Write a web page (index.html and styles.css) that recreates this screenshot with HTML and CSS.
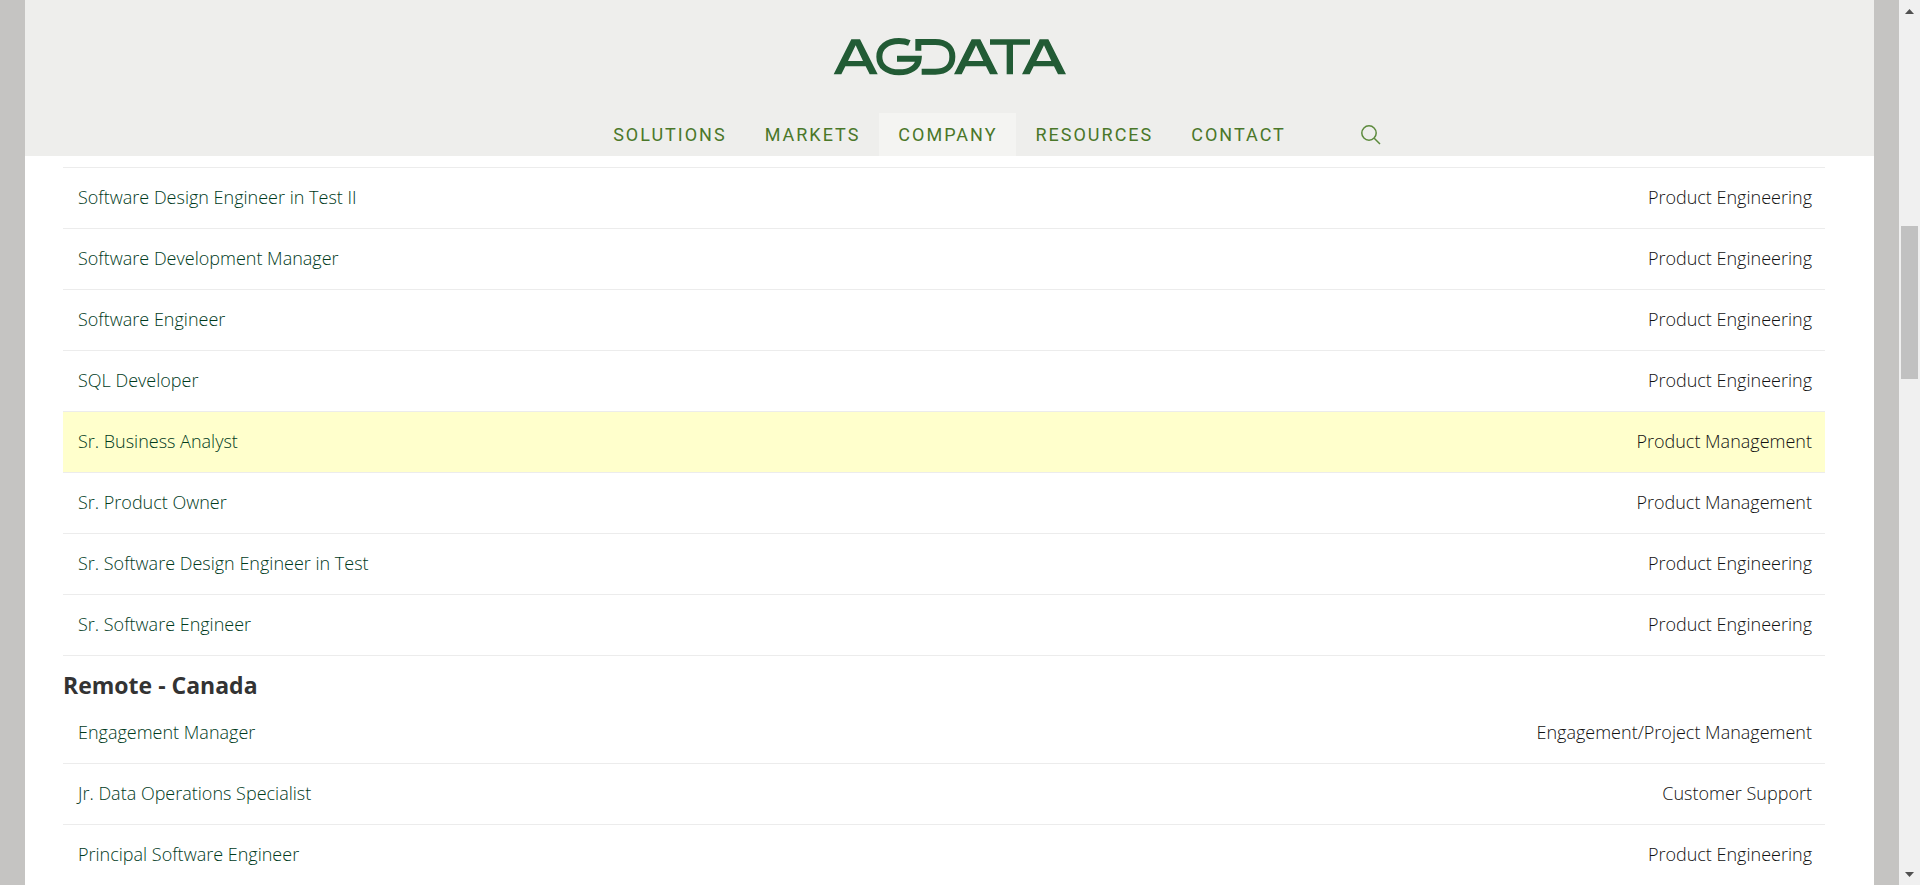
FILE: index.html
```html
<!DOCTYPE html>
<html lang="en">
<head>
<meta charset="utf-8">
<meta name="viewport" content="width=device-width, initial-scale=1">
<title>Careers | AGDATA</title>
<link rel="stylesheet" href="styles.css">
</head>
<body>
<div class="page">
  <header class="header">
    <a class="logo" href="#" aria-label="AGDATA">
      <svg class="logo-mark" viewBox="38 38 702 114" aria-hidden="true">
        <defs>
          <path id="peak" fill-rule="evenodd" d="M40 147 93 42H119L172 147H148L136 123H75L63 147ZM83 107H128L106 60Z"/>
        </defs>
        <use href="#peak"/>
        <use href="#peak" x="361"/>
        <use href="#peak" x="565"/>
        <path d="M509 42H629V58H578V147H559V58H509Z"/>
        <g class="logo-lines">
          <path d="M267 53C258 49 248 47 236 47C200 47 177 66 177 94C177 122 200 141 236 141C270 141 293 125 295 100H230"/>
          <path d="M294 76V50H345C378 50 396 68 396 94C396 121 378 139 345 139H304"/>
        </g>
      </svg>
    </a>
    <div class="menu">
      <nav class="nav" aria-label="Main">
        <a class="nav-link" href="#">SOLUTIONS</a>
        <a class="nav-link" href="#">MARKETS</a>
        <a class="nav-link nav-link-active" href="#">COMPANY</a>
        <a class="nav-link" href="#">RESOURCES</a>
        <a class="nav-link" href="#">CONTACT</a>
      </nav>
      <button class="search" type="button" aria-label="Search">
        <svg class="search-icon" viewBox="0 0 20 20" aria-hidden="true"><circle cx="8" cy="8" r="7.2"/><path d="M13.2 13.2 19 19"/></svg>
      </button>
    </div>
  </header>
  <main class="content">
    <table class="jobs jobs-continued">
      <tbody>
        <tr><td><a href="#">Software Design Engineer in Test II</a></td><td>Product Engineering</td></tr>
        <tr><td><a href="#">Software Development Manager</a></td><td>Product Engineering</td></tr>
        <tr><td><a href="#">Software Engineer</a></td><td>Product Engineering</td></tr>
        <tr><td><a href="#">SQL Developer</a></td><td>Product Engineering</td></tr>
        <tr class="highlight"><td><a href="#">Sr. Business Analyst</a></td><td>Product Management</td></tr>
        <tr><td><a href="#">Sr. Product Owner</a></td><td>Product Management</td></tr>
        <tr><td><a href="#">Sr. Software Design Engineer in Test</a></td><td>Product Engineering</td></tr>
        <tr><td><a href="#">Sr. Software Engineer</a></td><td>Product Engineering</td></tr>
      </tbody>
    </table>
    <h2 class="location">Remote - Canada</h2>
    <table class="jobs">
      <tbody>
        <tr><td><a href="#">Engagement Manager</a></td><td>Engagement/Project Management</td></tr>
        <tr><td><a href="#">Jr. Data Operations Specialist</a></td><td>Customer Support</td></tr>
        <tr><td><a href="#">Principal Software Engineer</a></td><td>Product Engineering</td></tr>
      </tbody>
    </table>
  </main>
</div>
<div class="scrollbar">
  <button class="scroll-button" type="button" aria-label="Scroll up"><svg class="scroll-arrow" viewBox="0 0 9 5" aria-hidden="true"><path d="M0 5 4.5 0 9 5Z"/></svg></button>
  <div class="scroll-track"><div class="scroll-thumb"></div></div>
  <button class="scroll-button" type="button" aria-label="Scroll down"><svg class="scroll-arrow" viewBox="0 0 9 5" aria-hidden="true"><path d="M0 0H9L4.5 5Z"/></svg></button>
</div>
</body>
</html>
```

FILE: styles.css
```css
* {
  box-sizing: border-box;
}

body {
  display: flex;
  height: 100vh;
  margin: 0;
  overflow: hidden;
  background: #c5c4c2;
  color: #111;
  font: 300 18px/28px "Open Sans", "Noto Sans", sans-serif;
}

.page {
  flex: 1;
  min-width: 0;
  margin: 0 25px;
  overflow: hidden;
  background: #fff;
}

.header {
  display: flex;
  flex-direction: column;
  align-items: center;
  background: #eeeeec;
}

.logo {
  padding: 38px 0 37px;
}

.logo-mark {
  display: block;
  width: 234px;
  height: 38px;
  fill: #225b35;
}

.logo-lines {
  fill: none;
  stroke: #225b35;
  stroke-width: 18px;
}

.menu {
  display: grid;
  grid-template-columns: 1fr auto 1fr;
  align-items: center;
  width: 100%;
}

.nav {
  display: flex;
  grid-column: 2;
}

.nav-link {
  padding: 0 19px;
  color: #4a7729;
  font: 400 18px/43px Roboto, sans-serif;
  letter-spacing: 2px;
  text-decoration: none;
}

.nav-link-active {
  background: #f4f4f2;
}

.search {
  justify-self: start;
  margin-left: 56px;
  padding: 0;
  border: 0;
  background: none;
}

.search-icon {
  display: block;
  width: 20px;
  height: 20px;
  fill: none;
  stroke: #5c8a3c;
  stroke-width: 1.5px;
}

.content {
  padding: 11px 49px 0 38px;
}

.jobs {
  width: 100%;
  border-spacing: 0;
}

.jobs-continued {
  border-top: 1px solid #ececec;
}

.jobs td {
  padding: 15px 13px 17px 15px;
  border-bottom: 1px solid #ececec;
}

.jobs td:last-child {
  text-align: right;
}

.jobs a {
  color: #003a1c;
  text-decoration: none;
}

.highlight {
  background: #ffffcc;
}

.location {
  margin: 0;
  padding-top: 12px;
  color: #333;
  font-size: 23px;
  font-weight: 700;
  line-height: 35px;
}

.scrollbar {
  display: flex;
  flex-direction: column;
  width: 21px;
  background: #f0f0f0;
}

.scroll-button {
  display: grid;
  place-items: center;
  height: 22px;
  padding: 0;
  border: 0;
  background: none;
}

.scroll-arrow {
  width: 9px;
  height: 5px;
  fill: #505050;
}

.scroll-track {
  flex: 1;
  padding: 204px 2px 0;
}

.scroll-thumb {
  height: 153px;
  background: #c1c1c1;
}
```
